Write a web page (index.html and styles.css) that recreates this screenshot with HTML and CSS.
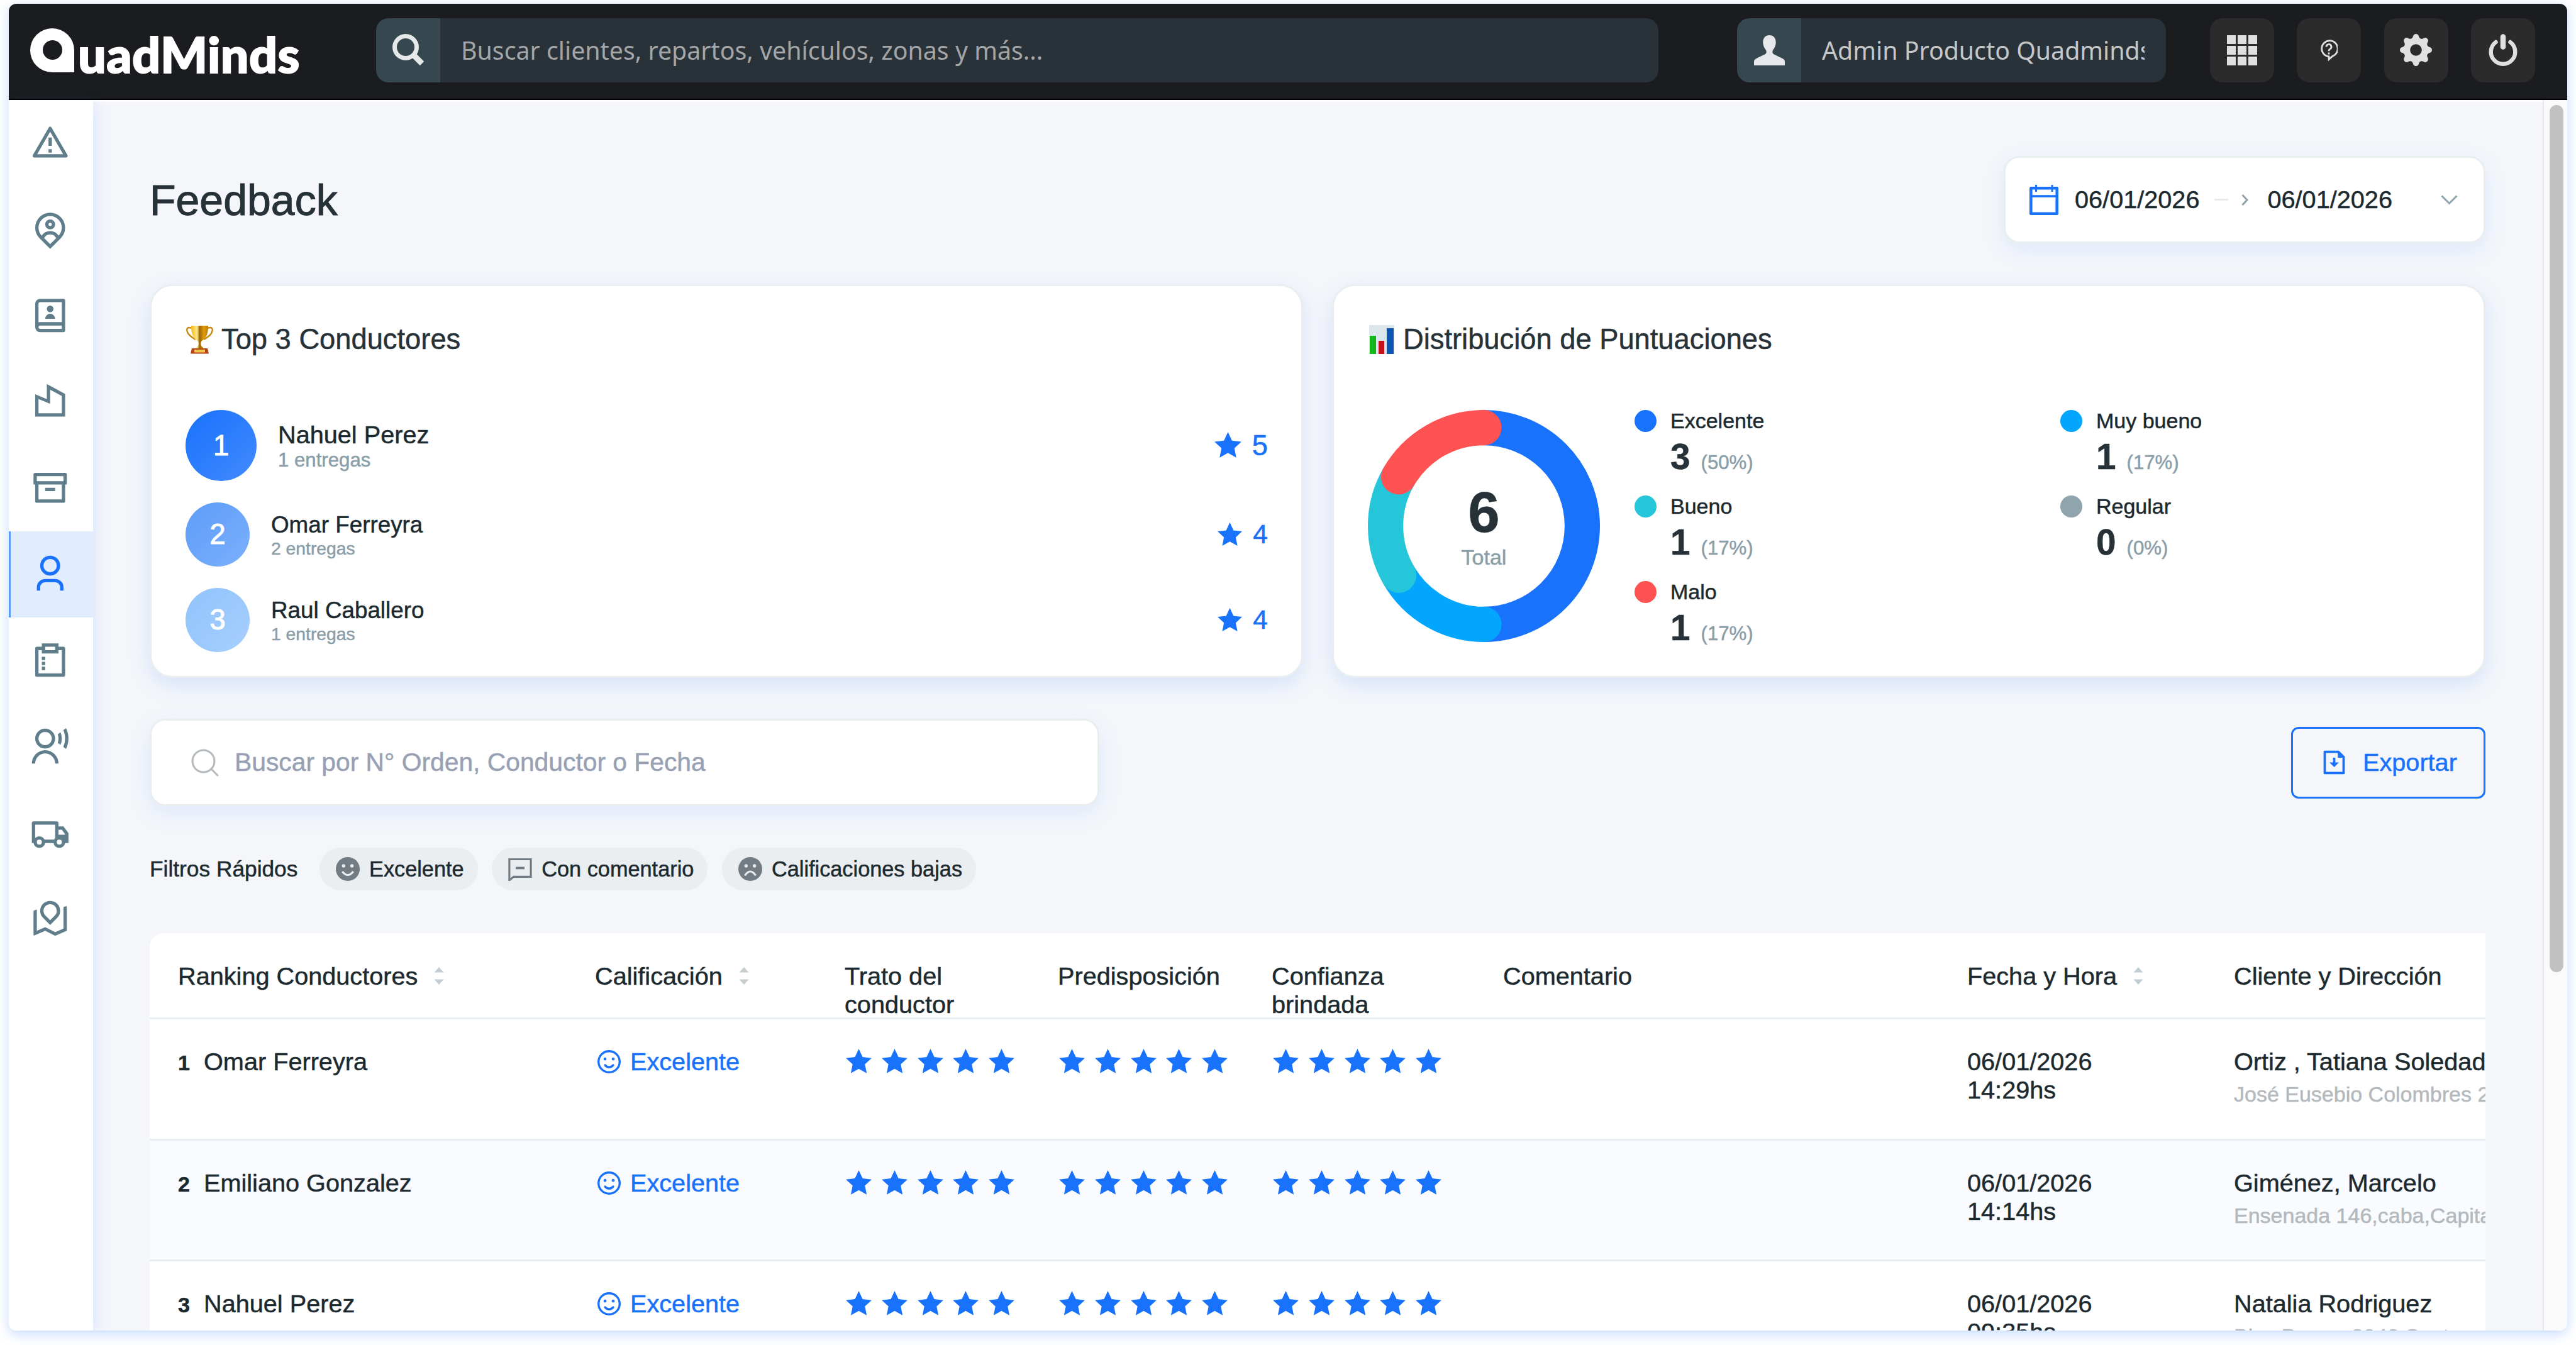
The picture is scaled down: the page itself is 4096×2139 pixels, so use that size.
FILE: index.html
```
<!DOCTYPE html>
<html lang="es">
<head>
    <meta charset="UTF-8">
    <meta name="viewport" content="width=device-width, initial-scale=1.0">
    <link rel="stylesheet" href="styles.css">
    <title>QuadMinds - Feedback</title>
</head>
<body>

<!-- Iconos -->
<svg class="sprite" xmlns="http://www.w3.org/2000/svg">
    <symbol id="star" viewBox="0 0 24 24"><path d="M12 18.26l-7.053 3.948 1.575-7.928L.587 8.792l8.027-.952L12 .5l3.386 7.34 8.027.952-5.935 5.488 1.575 7.928z"/></symbol>
    <symbol id="stars" viewBox="0 0 271 43">
        <use href="#star" x="0" width="43" height="43"/>
        <use href="#star" x="57" width="43" height="43"/>
        <use href="#star" x="114" width="43" height="43"/>
        <use href="#star" x="170" width="43" height="43"/>
        <use href="#star" x="227" width="43" height="43"/>
    </symbol>
    <symbol id="smile" viewBox="0 0 24 24">
        <circle cx="12" cy="12" r="10.9" fill="none" stroke="currentColor" stroke-width="2.2"/>
        <circle cx="7.8" cy="9.2" r="1.5"/><circle cx="16.2" cy="9.2" r="1.5"/>
        <path d="M7.8 15.6q4.2 4.2 8.4 0" fill="none" stroke="currentColor" stroke-width="2.2" stroke-linecap="round"/>
    </symbol>
    <symbol id="sort" viewBox="0 0 16 28"><path d="M8 0l7.5 8.5H.5zM8 28L.5 19.5h15z"/></symbol>
</svg>

<div class="app">
    <header class="topbar">
        <div class="logo"><span class="logo-mark"></span>uadMinds</div>
        <div class="search-box">
            <div class="box-icon">
                <svg width="51" height="51" viewBox="0 0 51 51"><circle cx="21" cy="21" r="17.5" fill="none" stroke="#e6e8e9" stroke-width="7"/><path d="M33 33l14 14" stroke="#e6e8e9" stroke-width="9"/></svg>
            </div>
            <span class="box-text">Buscar clientes, repartos, vehículos, zonas y más...</span>
        </div>
        <div class="user-box">
            <div class="box-icon">
                <svg width="49" height="48" viewBox="0 0 24 24" preserveAspectRatio="none" fill="#e6e8e9"><path d="M12 0C8.8 0 7 2.4 7 5.6c0 3 1.5 5 2.4 6.5.5 1.2.2 2.4-.8 3l-7 3.500C.5 19.3 0 20 0 21.2V24h24v-2.800c0-1.200-.5-1.900-1.600-2.600l-7-3.500c-1-.6-1.300-1.800-.8-3 .9-1.500 2.400-3.500 2.400-6.500C17 2.400 15.2 0 12 0z"/></svg>
            </div>
            <span class="box-text user-name">Admin Producto Quadminds</span>
        </div>
        <div class="top-buttons">
            <div class="top-button">
                <svg width="48" height="48" viewBox="0 0 48 48"><path d="M0 0h14v14H0zM17 0h14v14H17zM34 0h14v14H34zM0 17h14v14H0zM17 17h14v14H17zM34 17h14v14H34zM0 34h14v14H0zM17 34h14v14H17zM34 34h14v14H34z"/></svg>
            </div>
            <div class="top-button">
                <svg width="28" height="34" viewBox="0 0 28 34" fill="none" stroke="#e0e0e0" stroke-width="2.8"><path d="M14 27.5v4l6-5.300A12.700 12.700 0 1 0 14 27z"/><path d="M10 11.500a4 4 0 1 1 6 3.400c-1.600 1-2 1.600-2 3.300"/><path d="M14 20.500v3"/></svg>
            </div>
            <div class="top-button">
                <svg width="51" height="51" viewBox="0 0 16 16"><path d="M9.405 1.05c-.413-1.4-2.397-1.4-2.81 0l-.1.34a1.464 1.464 0 0 1-2.105.872l-.31-.17c-1.283-.698-2.686.705-1.987 1.987l.169.311c.446.82.023 1.841-.872 2.105l-.34.1c-1.4.413-1.4 2.397 0 2.81l.34.1a1.464 1.464 0 0 1 .872 2.105l-.17.31c-.698 1.283.705 2.686 1.987 1.987l.311-.169a1.464 1.464 0 0 1 2.105.872l.1.34c.413 1.4 2.397 1.4 2.81 0l.1-.34a1.464 1.464 0 0 1 2.105-.872l.31.17c1.283.698 2.686-.705 1.987-1.987l-.169-.311a1.464 1.464 0 0 1 .872-2.105l.34-.1c1.4-.413 1.4-2.397 0-2.81l-.34-.1a1.464 1.464 0 0 1-.872-2.105l.17-.31c.698-1.283-.705-2.686-1.987-1.987l-.311.169a1.464 1.464 0 0 1-2.105-.872l-.1-.34zM8 10.93a2.929 2.929 0 1 1 0-5.86 2.929 2.929 0 0 1 0 5.858z"/></svg>
            </div>
            <div class="top-button">
                <svg width="46" height="52" viewBox="0 0 46 52" fill="none" stroke="#e0e0e0" stroke-linecap="round"><path d="M11.5 13A19.3 19.3 0 1 0 34.500 13" stroke-width="6.4"/><path d="M23 4.500v16" stroke-width="8.5"/></svg>
            </div>
        </div>
    </header>

    <div class="body">
        <nav class="sidebar">
            <a class="side-item"><svg viewBox="0 0 24 24"><path d="M12.866 3l9.526 16.5a1 1 0 0 1-.866 1.5H2.474a1 1 0 0 1-.866-1.5L11.134 3a1 1 0 0 1 1.732 0zm-8.66 16h15.588L12 5.5 4.206 19zM11 16h2v2h-2v-2zm0-7h2v5h-2V9z"/></svg></a>
            <a class="side-item"><svg viewBox="0 0 24 24"><path d="M17.084 15.812a7 7 0 1 0-10.168 0A5.996 5.996 0 0 1 12 13a5.996 5.996 0 0 1 5.084 2.812zm-8.699 1.473L12 20.899l3.615-3.614a4 4 0 0 0-7.23 0zM12 23.728l-6.364-6.364a9 9 0 1 1 12.728 0L12 23.728zM12 12a3 3 0 1 1 0-6 3 3 0 0 1 0 6zm0-2a1 1 0 1 0 0-2 1 1 0 0 0 0 2z"/></svg></a>
            <a class="side-item"><svg viewBox="0 0 24 24"><path d="M20 22H6a3 3 0 0 1-3-3V5a3 3 0 0 1 3-3h14a1 1 0 0 1 1 1v18a1 1 0 0 1-1 1zm-1-2v-2H6a1 1 0 0 0 0 2h13zM5 16.17c.313-.11.65-.17 1-.17h13V4H6a1 1 0 0 0-1 1v11.17zM12 10a2 2 0 1 1 0-4 2 2 0 0 1 0 4zm-3 4a3 3 0 0 1 6 0H9z"/></svg></a>
            <a class="side-item"><svg viewBox="0 0 24 24"><path fill-rule="evenodd" d="M3 21V7.6l7 2.9V1.4l11 6V21zM12 4.8v8.5l-7-2.900V19h14V8.6z"/></svg></a>
            <a class="side-item"><svg viewBox="0 0 24 24"><path d="M3 10H2V4.003C2 3.449 2.455 3 2.992 3h18.016A.99.99 0 0 1 22 4.003V10h-1v10.001a.996.996 0 0 1-.993.999H3.993A.996.996 0 0 1 3 20.001V10zm16 0H5v9h14v-9zM4 5v3h16V5H4zm5 7h6v2H9v-2z"/></svg></a>
            <a class="side-item active"><svg viewBox="0 0 24 24"><path d="M20 22h-2v-2a3 3 0 0 0-3-3H9a3 3 0 0 0-3 3v2H4v-2a5 5 0 0 1 5-5h6a5 5 0 0 1 5 5v2zm-8-9a6 6 0 1 1 0-12 6 6 0 0 1 0 12zm0-2a4 4 0 1 0 0-8 4 4 0 0 0 0 8z"/></svg></a>
            <a class="side-item"><svg viewBox="0 0 24 24"><path d="M17 2v2h3.007c.548 0 .993.445.993.993v16.014a.994.994 0 0 1-.993.993H3.993A.994.994 0 0 1 3 21.007V4.993C3 4.445 3.445 4 3.993 4H7V2h10zM7 6H5v14h14V6h-2v2H7V6zm2 10v2H7v-2h2zm0-3v2H7v-2h2zm0-3v2H7v-2h2zm6-6H9v2h6V4z"/></svg></a>
            <a class="side-item"><svg viewBox="0 0 24 24"><path d="M1 22a8 8 0 1 1 16 0h-2a6 6 0 1 0-12 0H1zm8-9c-3.315 0-6-2.685-6-6s2.685-6 6-6 6 2.685 6 6-2.685 6-6 6zm0-2c2.21 0 4-1.79 4-4s-1.79-4-4-4-4 1.79-4 4 1.79 4 4 4zM21.548.784A13.942 13.942 0 0 1 23 7c0 2.233-.523 4.344-1.452 6.216l-1.645-1.196A11.955 11.955 0 0 0 21 7c0-1.792-.393-3.493-1.097-5.02L21.548.784zm-3.302 2.4A9.97 9.97 0 0 1 19 7a9.97 9.97 0 0 1-.754 3.816l-1.677-1.22A7.99 7.99 0 0 0 17 7a7.99 7.99 0 0 0-.43-2.596l1.676-1.22z"/></svg></a>
            <a class="side-item"><svg viewBox="0 0 24 24"><path d="M8.965 18a3.5 3.5 0 0 1-6.93 0H1V6a1 1 0 0 1 1-1h14a1 1 0 0 1 1 1v2h3l3 4.056V18h-2.035a3.5 3.5 0 0 1-6.93 0h-5.07zM15 7H3v8.05a3.5 3.5 0 0 1 5.663.95h5.674c.168-.353.393-.674.663-.95V7zm2 6h4v-.285L18.992 10H17v3zm.5 6a1.5 1.5 0 1 0 0-3.001 1.5 1.5 0 0 0 0 3.001zM7 17.5a1.5 1.5 0 1 0-3 0 1.5 1.5 0 0 0 3 0z"/></svg></a>
            <a class="side-item"><svg viewBox="0 0 24 24"><path d="M4 6.143v12.824l5.065-2.17 6 3L20 17.68V4.857l1.303-.558a.5.5 0 0 1 .697.46V19l-7 3-6-3-6.303 2.701a.5.5 0 0 1-.697-.46V7l2-.857zm12.243 5.1L12 15.485l-4.243-4.242a6 6 0 1 1 8.486 0zM12 12.657l2.828-2.829a4 4 0 1 0-5.656 0L12 12.657z"/></svg></a>
        </nav>

        <main class="content">
            <div class="page-header">
                <h1>Feedback</h1>
                <div class="date-range">
                    <svg class="calendar" width="46" height="48" viewBox="0 0 46 48" fill="none" stroke="#1872fb"><path d="M2.3 5.300h41.400v40.400H2.300z" stroke-width="4.6" stroke-linejoin="round"/><path d="M2 18h42" stroke-width="3.5"/><path d="M10.500 0v11M36 0v11" stroke-width="3"/></svg>
                    <span>06/01/2026</span>
                    <span class="dash"></span>
                    <svg class="arrow" width="11" height="18" viewBox="0 0 11 18" fill="none" stroke="#90a4ae" stroke-width="3"><path d="M1.500 1l7.500 8-7.500 8"/></svg>
                    <span>06/01/2026</span>
                    <svg class="chevron" width="27" height="16" viewBox="0 0 27 16" fill="none" stroke="#90a4ae" stroke-width="3"><path d="M1.500 1.500l12 12 12-12"/></svg>
                </div>
            </div>

            <div class="cards">
                <section class="card">
                    <h2>
                        <svg width="45" height="46" viewBox="0 0 45 46">
                            <defs>
                                <linearGradient id="gold"><stop offset="0" stop-color="#f7b916"/><stop offset=".35" stop-color="#ffe98a"/><stop offset=".5" stop-color="#9c6503"/><stop offset=".75" stop-color="#e29c0c"/><stop offset="1" stop-color="#b67a05"/></linearGradient>
                            </defs>
                            <path d="M10 5C3 2 1 6 3 11c2 6 7 8 13 12M35 5c7-3 9 1 7 6-2 6-7 8-13 12" fill="none" stroke="#c98a12" stroke-width="2.4"/>
                            <path d="M9 1h27c0 13-3 20-10 24-2 2-2 5-1 8l4 4H16l4-4c1-3 1-6-1-8C12 21 9 14 9 1z" fill="url(#gold)"/>
                            <path d="M10 37h25l2 8.500H8z" fill="#b5461a"/>
                            <path d="M14 39h17v4.500H14z" fill="#f2c54b"/>
                        </svg>
                        Top 3 Conductores
                    </h2>
                    <div class="driver first">
                        <div class="medal">1</div>
                        <div class="driver-info"><div class="driver-name">Nahuel Perez</div><div class="driver-sub">1 entregas</div></div>
                        <div class="score"><svg><use href="#star"/></svg>5</div>
                    </div>
                    <div class="driver second">
                        <div class="medal">2</div>
                        <div class="driver-info"><div class="driver-name">Omar Ferreyra</div><div class="driver-sub">2 entregas</div></div>
                        <div class="score"><svg><use href="#star"/></svg>4</div>
                    </div>
                    <div class="driver third">
                        <div class="medal">3</div>
                        <div class="driver-info"><div class="driver-name">Raul Caballero</div><div class="driver-sub">1 entregas</div></div>
                        <div class="score"><svg><use href="#star"/></svg>4</div>
                    </div>
                </section>

                <section class="card">
                    <h2>
                        <svg width="44" height="46" viewBox="0 0 44 46"><path d="M2 0h40v46H2z" fill="#dbe5ec"/><path d="M3 17h10v29H3z" fill="#12b51b"/><path d="M17 25h9v21h-9z" fill="#c4121d"/><path d="M30 5h11v41H30z" fill="#0b55b4"/></svg>
                        Distribución de Puntuaciones
                    </h2>
                    <div class="chart">
                        <div class="donut">
                            <svg width="369" height="369" viewBox="-184 -184 368 368" fill="none" stroke-width="56" stroke-linecap="round">
                                <path d="M0-156A156 156 0 0 1 0 156" stroke="#1872fb"/>
                                <path d="M0 156A156 156 0 0 1-135.1 78" stroke="#03a6ff"/>
                                <path d="M-135.1 78A156 156 0 0 1-135.1-78" stroke="#26c6da"/>
                                <path d="M-135.1-78A156 156 0 0 1 0-156" stroke="#ff5252"/>
                            </svg>
                            <div class="donut-label"><b>6</b><span>Total</span></div>
                        </div>
                        <div class="legend">
                            <div class="legend-item"><i class="dot blue"></i><div>Excelente<p><b>3</b><small>(50%)</small></p></div></div>
                            <div class="legend-item"><i class="dot sky"></i><div>Muy bueno<p><b>1</b><small>(17%)</small></p></div></div>
                            <div class="legend-item"><i class="dot teal"></i><div>Bueno<p><b>1</b><small>(17%)</small></p></div></div>
                            <div class="legend-item"><i class="dot gray"></i><div>Regular<p><b>0</b><small>(0%)</small></p></div></div>
                            <div class="legend-item"><i class="dot red"></i><div>Malo<p><b>1</b><small>(17%)</small></p></div></div>
                        </div>
                    </div>
                </section>
            </div>

            <div class="toolbar">
                <div class="table-search">
                    <svg width="44" height="44" viewBox="0 0 44 44" fill="none" stroke="#b4babd" stroke-width="3"><circle cx="19.5" cy="19.5" r="17.5"/><path d="M32 32l11 11"/></svg>
                    <span>Buscar por N° Orden, Conductor o Fecha</span>
                </div>
                <div class="export">
                    <svg width="45" height="45" viewBox="0 0 24 24"><path fill-rule="evenodd" d="M16 2l5 5v14.008a.993.993 0 0 1-.993.992H3.993A1 1 0 0 1 3 21.008V2.992C3 2.444 3.445 2 3.993 2H16zM15 4H5v16h14V8h-4V4zM13 12h3l-4 4-4-4h3V8h2v4z"/></svg>
                    Exportar
                </div>
            </div>

            <div class="filters">
                <span class="filters-label">Filtros Rápidos</span>
                <div class="chip">
                    <svg viewBox="0 0 24 24"><circle cx="12" cy="12" r="12"/><g fill="#ebeef1"><circle cx="7.8" cy="8.8" r="1.7"/><circle cx="16.2" cy="8.8" r="1.7"/></g><path d="M6.5 14.5q5.5 7 11 0" fill="none" stroke="#ebeef1" stroke-width="2"/></svg>
                    Excelente
                </div>
                <div class="chip">
                    <svg viewBox="0 0 24 24"><path d="M1.2 2.2h21.600v17.600H5.500l-4.300 3.500z" fill="none" stroke="#737c82" stroke-width="2"/><path d="M7.500 9.800h9v2.400h-9z"/></svg>
                    Con comentario
                </div>
                <div class="chip">
                    <svg viewBox="0 0 24 24"><circle cx="12" cy="12" r="12"/><g fill="#ebeef1"><circle cx="7.8" cy="8.8" r="1.7"/><circle cx="16.2" cy="8.8" r="1.7"/></g><path d="M6.5 18.5q5.5-8 11 0" fill="none" stroke="#ebeef1" stroke-width="2"/></svg>
                    Calificaciones bajas
                </div>
            </div>

            <div class="table">
                <div class="row head">
                    <div>Ranking Conductores<svg class="sort"><use href="#sort"/></svg></div>
                    <div>Calificación<svg class="sort"><use href="#sort"/></svg></div>
                    <div>Trato del<br>conductor</div>
                    <div>Predisposición</div>
                    <div>Confianza<br>brindada</div>
                    <div>Comentario</div>
                    <div>Fecha y Hora<svg class="sort"><use href="#sort"/></svg></div>
                    <div>Cliente y Dirección</div>
                </div>
                <div class="row">
                    <div><b>1</b>Omar Ferreyra</div>
                    <div class="rating"><svg><use href="#smile"/></svg>Excelente</div>
                    <div><svg class="stars"><use href="#stars"/></svg></div>
                    <div><svg class="stars"><use href="#stars"/></svg></div>
                    <div><svg class="stars"><use href="#stars"/></svg></div>
                    <div></div>
                    <div>06/01/2026<br>14:29hs</div>
                    <div>Ortiz , Tatiana Soledad<p>José Eusebio Colombres 254</p></div>
                </div>
                <div class="row even">
                    <div><b>2</b>Emiliano Gonzalez</div>
                    <div class="rating"><svg><use href="#smile"/></svg>Excelente</div>
                    <div><svg class="stars"><use href="#stars"/></svg></div>
                    <div><svg class="stars"><use href="#stars"/></svg></div>
                    <div><svg class="stars"><use href="#stars"/></svg></div>
                    <div></div>
                    <div>06/01/2026<br>14:14hs</div>
                    <div>Giménez, Marcelo<p>Ensenada 146,caba,Capital</p></div>
                </div>
                <div class="row">
                    <div><b>3</b>Nahuel Perez</div>
                    <div class="rating"><svg><use href="#smile"/></svg>Excelente</div>
                    <div><svg class="stars"><use href="#stars"/></svg></div>
                    <div><svg class="stars"><use href="#stars"/></svg></div>
                    <div><svg class="stars"><use href="#stars"/></svg></div>
                    <div></div>
                    <div>06/01/2026<br>09:35hs</div>
                    <div>Natalia Rodriguez<p>Blas Parera 3048,Santa</p></div>
                </div>
            </div>
        </main>

        <div class="scrollbar"><div class="scroll-thumb"></div></div>
    </div>
</div>

</body>
</html>
```
FILE: styles.css
```
* {
    box-sizing: border-box;
}

body {
    margin: 0;
    width: 4096px;
    height: 2139px;
    overflow: hidden;
    background-color: #fff;
    font-family: "Liberation Sans", Arial, sans-serif;
    font-size: 39.67px;
    color: #1c2a30;
    -webkit-text-stroke: 0.5px;
}

h1, h2, p {
    margin: 0;
    font-weight: normal;
}

svg {
    flex-shrink: 0;
}

.sprite {
    display: none;
}

.app {
    margin: 6px 14px 0;
    height: 2110px;
    display: flex;
    flex-direction: column;
    border-radius: 12px;
    overflow: hidden;
    box-shadow: 0 6px 20px rgba(70, 140, 255, 0.3);
}

/* Barra superior */
.topbar {
    height: 153px;
    flex-shrink: 0;
    display: flex;
    align-items: center;
    padding: 0 51px 4px 34px;
    background-color: #1b1c1f;
    border-bottom: 2px solid #000;
}

.logo {
    display: flex;
    align-items: flex-end;
    width: 550px;
    height: 70px;
    color: #fff;
    font-family: Lato, sans-serif;
    font-weight: 900;
    font-size: 79px;
    line-height: 59px;
    letter-spacing: 0.4px;
    -webkit-text-stroke: 2px;
}

.logo-mark {
    width: 70px;
    height: 70px;
    margin-right: 6px;
    display: flex;
    justify-content: center;
    align-items: center;
    background-color: #fff;
    border-radius: 50% 50% 0 50%;
}

.logo-mark::after {
    content: "";
    width: 31px;
    height: 31px;
    border-radius: 50%;
    background-color: #1b1c1f;
}

.search-box,
.user-box {
    height: 102px;
    display: flex;
    align-items: center;
    border-radius: 20px;
    overflow: hidden;
    background-color: #293239;
    font-family: "Noto Sans", sans-serif;
    font-size: 39.3px;
    -webkit-text-stroke: 0;
}

.search-box {
    width: 2039px;
    color: #a3a5a7;
}

.user-box {
    width: 682px;
    margin-left: 125px;
    padding-right: 34px;
    color: #c4c6c8;
}

.box-icon {
    width: 102px;
    height: 102px;
    flex-shrink: 0;
    display: flex;
    justify-content: center;
    align-items: center;
    background-color: #37474f;
}

.box-text {
    margin-left: 33px;
    white-space: nowrap;
    overflow: hidden;
}

.top-buttons {
    display: flex;
    gap: 36.5px;
    margin-left: auto;
}

.top-button {
    width: 102px;
    height: 102px;
    display: flex;
    justify-content: center;
    align-items: center;
    border-radius: 20px;
    background-color: #2b2b2b;
    fill: #e0e0e0;
}

.body {
    flex: 1;
    min-height: 0;
    display: flex;
}

/* Menu lateral */
.sidebar {
    width: 134px;
    flex-shrink: 0;
    z-index: 1;
    background-color: #fff;
    box-shadow: 4px 6px 24px rgba(24, 114, 251, 0.12);
}

.side-item {
    height: 137.2px;
    display: flex;
    justify-content: center;
    align-items: center;
    padding: 0 2px 1px 0;
    fill: #5f7d8b;
}

.side-item svg {
    width: 63.5px;
    height: 63.5px;
}

.side-item.active {
    border-left: 3px solid #5a9bff;
    padding-right: 5px;
    background-color: #e1edff;
    fill: #1872fb;
}

/* Contenido */
.content {
    flex: 1;
    min-width: 0;
    padding: 86px 91px 0 90px;
    overflow: hidden;
    border-top: 3px solid #fff;
    background-color: #f5f6fa;
}

.page-header {
    height: 139px;
    display: flex;
    justify-content: space-between;
    align-items: center;
}

h1 {
    font-size: 68px;
    color: #263238;
    -webkit-text-stroke: 1px;
}

.date-range {
    width: 766px;
    height: 139px;
    padding-left: 38px;
    display: flex;
    align-items: center;
    border: 3px solid #e9eef1;
    border-radius: 25px;
    background-color: #fff;
    box-shadow: 0 11px 34px rgba(24, 114, 251, 0.1);
}

.calendar {
    margin-right: 26px;
}

.dash {
    width: 22px;
    height: 3px;
    margin-left: 24px;
    background-color: #e6eaec;
}

.arrow {
    margin: 0 30px 0 21px;
}

.chevron {
    margin-left: 77px;
}

.cards {
    display: grid;
    grid-template-columns: 1fr 1fr;
    gap: 46px;
    margin-top: 65px;
}

.card {
    height: 626px;
    padding: 59px 53px 0 54px;
    border: 3px solid #e9eef1;
    border-radius: 36px;
    background-color: #fff;
    box-shadow: 0 11px 34px rgba(24, 114, 251, 0.14);
}

h2 {
    height: 52px;
    margin-bottom: 86px;
    display: flex;
    align-items: center;
    gap: 12px;
    font-size: 45.3px;
    color: #263238;
}

.driver {
    display: flex;
    align-items: center;
    margin-bottom: 34px;
}

.medal {
    width: 102px;
    height: 102px;
    display: flex;
    justify-content: center;
    align-items: center;
    border-radius: 50%;
    color: #fff;
    font-size: 45.3px;
    -webkit-text-stroke: 1px;
}

.driver-info {
    flex: 1;
    margin-left: 34px;
    padding-top: 2px;
}

.driver-name {
    font-size: 36.8px;
}

.driver-sub {
    font-size: 28.3px;
    color: #8a9ea8;
}

.score {
    display: flex;
    align-items: center;
    gap: 16px;
    font-size: 42.5px;
    color: #1872fb;
    fill: #1872fb;
}

.score svg {
    width: 41px;
    height: 41px;
}

.first .medal {
    width: 113px;
    height: 113px;
    background: linear-gradient(135deg, #1872fb, #448aff);
}

.first .driver-name {
    font-size: 39.67px;
}

.first .driver-sub {
    font-size: 31.2px;
}

.first .score {
    font-size: 45.3px;
}

.first .score svg {
    width: 45px;
    height: 45px;
}

.second .medal {
    background: linear-gradient(135deg, #5d9cf8, #7cb0fc);
}

.third .medal {
    background: linear-gradient(135deg, #90c3fc, #a6cffd);
}

.chart {
    display: flex;
}

.donut {
    width: 368px;
    height: 368px;
    display: grid;
}

.donut svg,
.donut-label {
    grid-area: 1 / 1;
}

.donut-label {
    display: flex;
    flex-direction: column;
    align-items: center;
    padding-top: 111px;
}

.donut-label b {
    font-size: 90.6px;
    line-height: 104px;
    color: #263238;
}

.donut-label span {
    font-size: 34px;
    color: #8a9ea8;
}

.legend {
    display: grid;
    grid-template-columns: 677px auto;
    grid-auto-rows: 136px;
    margin-left: 56px;
    font-size: 34px;
}

.legend-item {
    display: flex;
    gap: 22px;
    line-height: 34px;
}

.dot {
    width: 35px;
    height: 35px;
    border-radius: 50%;
}

.legend-item p {
    display: flex;
    align-items: baseline;
    gap: 17px;
    margin-top: 12px;
    line-height: 57px;
}

.legend-item b {
    font-size: 56.7px;
    color: #263238;
}

.legend-item small {
    font-size: 31.2px;
    color: #8a9ea8;
}

.blue { background-color: #1872fb; }
.sky { background-color: #03a6ff; }
.teal { background-color: #26c6da; }
.gray { background-color: #90a4ae; }
.red { background-color: #ff5252; }

/* Buscador y exportar */
.toolbar {
    display: flex;
    justify-content: space-between;
    align-items: center;
    margin-top: 65px;
}

.table-search {
    width: 1510px;
    height: 139px;
    padding-left: 63px;
    display: flex;
    align-items: center;
    gap: 25px;
    border: 3px solid #e9eef1;
    border-radius: 25px;
    background-color: #fff;
    box-shadow: 0 11px 34px rgba(24, 114, 251, 0.1);
    font-size: 40.8px;
    color: #98a1b3;
}

.export {
    width: 309px;
    height: 114px;
    display: flex;
    align-items: center;
    gap: 23px;
    padding-left: 43px;
    border: 3px solid #1872fb;
    border-radius: 12px;
    color: #1872fb;
    fill: #1872fb;
}

.filters {
    display: flex;
    align-items: center;
    gap: 22.6px;
    margin-top: 66px;
    font-size: 34.3px;
}

.filters-label {
    margin-right: 12px;
    font-size: 35.3px;
}

.chip {
    height: 68px;
    display: flex;
    align-items: center;
    gap: 15px;
    padding: 0 22px 0 26px;
    border-radius: 34px;
    background-color: #ebeef1;
    fill: #737c82;
}

.chip svg {
    width: 38px;
    height: 38px;
}

/* Tabla */
.table {
    margin-top: 68px;
    overflow: hidden;
    border-radius: 22px 0 0 0;
    background-color: #fff;
}

.row {
    height: 192.6px;
    display: grid;
    grid-template-columns: 663px 397px 339px 340px 368px 738px 424px 400px;
    padding: 45px 0 0 45px;
    border-top: 3px solid #e8edf1;
    white-space: nowrap;
}

.row.head {
    height: 134px;
    padding-top: 46px;
    border-top: none;
}

.row.even {
    background-color: #fafbff;
}

.row b {
    display: inline-block;
    width: 41px;
    font-size: 34px;
}

.row p {
    margin-top: 10px;
    font-size: 34px;
    color: #b3b9bc;
}

.sort {
    width: 16px;
    height: 28px;
    margin-left: 26px;
    fill: #c3ced4;
}

.rating {
    display: flex;
    align-items: center;
    align-self: start;
    gap: 15px;
    padding-left: 4px;
    color: #1872fb;
    fill: #1872fb;
}

.rating svg {
    width: 37px;
    height: 37px;
}

.stars {
    display: block;
    width: 271px;
    height: 43px;
    margin: 1px 0 0 1px;
    fill: #1872fb;
}

.scrollbar {
    width: 39px;
    flex-shrink: 0;
    padding: 8px 0 0 9px;
    border-left: 2px solid #e6e7ea;
    background-color: #fafafa;
}

.scroll-thumb {
    width: 22px;
    height: 1379px;
    border-radius: 11px;
    background-color: #c1c1c1;
}
```
